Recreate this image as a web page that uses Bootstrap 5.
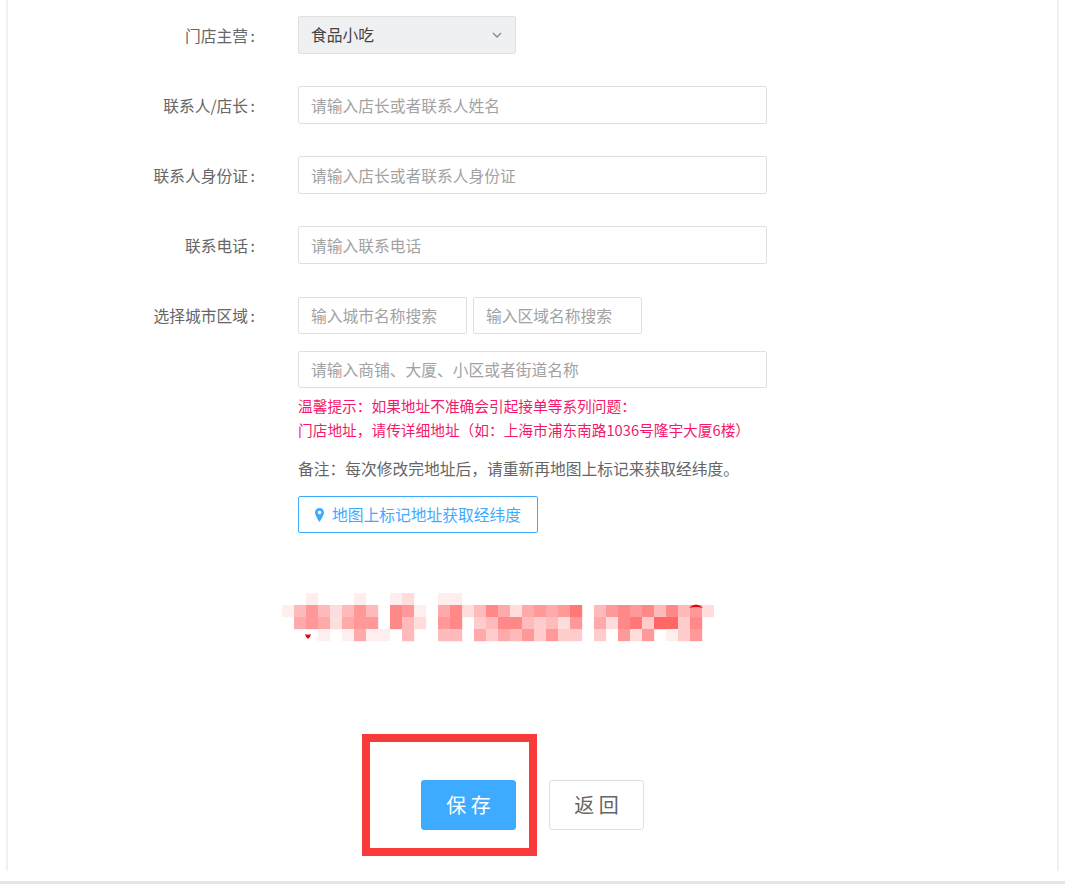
<!DOCTYPE html>
<html lang="zh-CN">
<head>
<meta charset="utf-8">
<title>门店信息</title>
<link href="https://cdn.jsdelivr.net/npm/bootstrap@5.3.0/dist/css/bootstrap.min.css" rel="stylesheet">
<style>
html,body{height:884px;overflow:hidden;background:#fff}
body{font-family:"Noto Sans CJK SC","Liberation Sans",sans-serif;font-size:15.75px;color:#666}
.page-shell{height:884px;position:relative;border-bottom:3px solid #e6e6e6}
.panel-box{margin:0 6px;height:871px;padding:16px 0 0;border-left:2px solid #f1f1f1;border-right:2px solid #f1f1f1}
.form-line{margin-bottom:32px}
.form-line.last-line{margin-bottom:33px}
.field-name{width:248px;height:38px;flex:none;text-align:right;line-height:40px;color:#666;margin-right:42px}
.field-name.area-name{line-height:38px}
.colon-mark{padding-left:2.5px;padding-right:1px}
.form-control.shop-input,.form-select.shop-select{height:38px;border:1px solid #e0e0e0;border-radius:2px;font-size:15.75px;padding:0 12px;color:#555;box-shadow:none}
.form-control.shop-input::placeholder{color:#a2a2a2;opacity:1}
.wide-field{width:469px}
.city-field{width:169px}
.city-row{gap:6px}
.form-control.shop-input.short-h{height:37px}
.form-control.shop-input.addr-field{margin-top:17px}
.form-select.shop-select{width:218px;background-color:#eef0f1;background-image:url("data:image/svg+xml,%3csvg xmlns='http://www.w3.org/2000/svg' viewBox='0 0 10 6'%3e%3cpath fill='none' stroke='%23888' stroke-width='1.3' d='M1 1l4 4 4-4'/%3e%3c/svg%3e");background-size:10px 6px;background-position:right 13px center;color:#444}
.hint-red{color:#f5186b;font-size:14.7px;line-height:24px;margin:6px 0 0}
.hint-note{color:#666;font-size:15.75px;line-height:24px;margin:15px 0 15px}
.btn.map-btn{width:240px;height:37px;padding:0;border:1px solid #3fabff;border-radius:2px;color:#3fabff;font-size:15.75px;background:#fff}
.mosaic-strip{display:block;margin:60px 0 137px 274px}
.btn.save-btn,.btn.back-btn{width:95px;height:50px;padding:0;border-radius:3px;font-size:20px;letter-spacing:0}
.btn.save-btn{margin-left:413px;background:#3dabff;border:1px solid #3dabff;color:#fff}
.btn.back-btn{margin-left:33px;background:#fff;border:1px solid #e0e0e0;color:#666}
.mark-frame{position:absolute;left:362px;top:734px;width:175px;height:122px;border:8px solid #f93a3a;pointer-events:none}
</style>
</head>
<body>
<div class="page-shell">
  <div class="panel-box">
    <div class="d-flex form-line">
      <div class="field-name">门店主营<span class="colon-mark">:</span></div>
      <select class="form-select shop-select" aria-label="门店主营"><option>食品小吃</option></select>
    </div>
    <div class="d-flex form-line">
      <div class="field-name">联系人/店长<span class="colon-mark">:</span></div>
      <input class="form-control shop-input wide-field" placeholder="请输入店长或者联系人姓名">
    </div>
    <div class="d-flex form-line">
      <div class="field-name">联系人身份证<span class="colon-mark">:</span></div>
      <input class="form-control shop-input wide-field" placeholder="请输入店长或者联系人身份证">
    </div>
    <div class="d-flex form-line last-line">
      <div class="field-name">联系电话<span class="colon-mark">:</span></div>
      <input class="form-control shop-input wide-field" placeholder="请输入联系电话">
    </div>
    <div class="d-flex">
      <div class="field-name area-name">选择城市区域<span class="colon-mark">:</span></div>
      <div>
        <div class="d-flex city-row">
          <input class="form-control shop-input short-h city-field" placeholder="输入城市名称搜索">
          <input class="form-control shop-input short-h city-field" placeholder="输入区域名称搜索">
        </div>
        <input class="form-control shop-input short-h wide-field addr-field" placeholder="请输入商铺、大厦、小区或者街道名称">
        <p class="hint-red">温馨提示：如果地址不准确会引起接单等系列问题：<br>门店地址，请传详细地址（如：上海市浦东南路1036号隆宇大厦6楼）</p>
        <p class="hint-note">备注：每次修改完地址后，请重新再地图上标记来获取经纬度。</p>
        <button type="button" class="btn map-btn d-flex align-items-center justify-content-center gap-2">
          <svg width="9" height="14" viewBox="0 0 9 14" aria-hidden="true"><path fill="#3fabff" fill-rule="evenodd" d="M4.500 0A4.500 4.500 0 0 0 0 4.500C0 7.600 4.500 14 4.500 14S9 7.600 9 4.500A4.500 4.500 0 0 0 4.500 0Zm0 6.300a1.800 1.800 0 1 1 0-3.600 1.800 1.800 0 0 1 0 3.600Z"/></svg>
          <span>地图上标记地址获取经纬度</span>
        </button>
      </div>
    </div>
    <svg id="mosaic" class="mosaic-strip" width="432" height="50" viewBox="0 0 432 50" aria-hidden="true"></svg>
    <div class="d-flex">
      <button type="button" class="btn save-btn">保 存</button>
      <button type="button" class="btn back-btn">返 回</button>
    </div>
  </div>
  <div class="mark-frame"></div>
</div>
<script>
var rows=["ffefffeffedffee",
"eb9bdb9bf89efa8db8ada9a97fb9898b8b9d",
"fa9ada99f8bdf98fcb88bcbd9fad87c66c8f",
"fffefeaeefbffbbfacab9c9ccfcf9d9fec9f"];
var svg=document.getElementById("mosaic"),h="";
rows.forEach(function(r,y){for(var x=0;x<36;x++){var c=r[x]||"f";if(c!=="f"){h+='<rect x="'+x*12+'" y="'+y*12+'" width="12.2" height="12.2" fill="#ff'+c+c+c+c+'"/>';}}});
h+='<path d="M407 15q7-7 14 0q-7-2-14 0z" fill="#e8000a"/><path d="M23 41q3 1.500 6 0q-1 4-3 5q-2-1-3-5z" fill="#e8000a"/>';
svg.innerHTML=h;
</script>
<script src="https://cdn.jsdelivr.net/npm/bootstrap@5.3.0/dist/js/bootstrap.bundle.min.js"></script>
</body>
</html>
